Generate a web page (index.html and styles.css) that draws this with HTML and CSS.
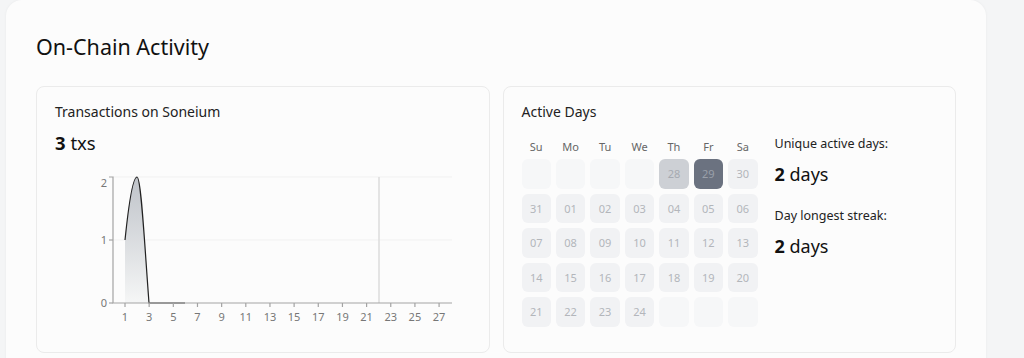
FILE: index.html
```html
<!DOCTYPE html>
<html lang="en">
<head>
    <meta charset="UTF-8">
    <meta name="viewport" content="width=device-width, initial-scale=1.0">
    <title>On-Chain Activity</title>
    <link rel="stylesheet" href="styles.css">
</head>
<body>
    <div class="panel">
        <h2 class="panel-title">On-Chain Activity</h2>

        <div class="cards">
            <!-- transactions chart -->
            <div class="card">
                <div class="card-title">Transactions on Soneium</div>
                <div class="big-value"><b>3</b> txs</div>
                <svg class="chart" width="415" height="165" viewBox="0 0 415 165">
                    <defs>
                        <linearGradient id="areaFill" x1="0" y1="0" x2="0" y2="1">
                            <stop offset="0" stop-color="#bfc3c9"/>
                            <stop offset="1" stop-color="#f5f6f6"/>
                        </linearGradient>
                    </defs>
                    <line x1="58" y1="11" x2="397" y2="11" class="grid"/>
                    <line x1="58" y1="74" x2="397" y2="74" class="grid"/>
                    <line x1="324" y1="11" x2="324" y2="137" class="marker"/>

                    <path d="M70,74 C73,45 77,11 82,11 C86,11 89,70 94,137 L70,137 Z" fill="url(#areaFill)"/>
                    <path d="M70,74 C73,45 77,11 82,11 C86,11 89,70 94,137 L130,137" class="line"/>

                    <path d="M54,11 H58 V137 H397" class="axis"/>
                    <line x1="54" y1="74" x2="58" y2="74" class="axis"/>
                    <line x1="54" y1="137" x2="58" y2="137" class="axis"/>
                    <g class="ylabels">
                        <text x="52" y="21">2</text>
                        <text x="52" y="78">1</text>
                        <text x="52" y="141">0</text>
                    </g>
                    <g class="xticks" id="xticks"></g>
                </svg>
            </div>

            <!-- active days -->
            <div class="card">
                <div class="card-title">Active Days</div>
                <div class="days-body">
                    <div class="calendar">
                        <div class="weekdays">
                            <span>Su</span><span>Mo</span><span>Tu</span><span>We</span><span>Th</span><span>Fr</span><span>Sa</span>
                        </div>
                        <div class="days" id="days"></div>
                    </div>
                    <div class="stats">
                        <div class="stat-label">Unique active days:</div>
                        <div class="stat-value"><b>2</b> days</div>
                        <div class="stat-label second">Day longest streak:</div>
                        <div class="stat-value"><b>2</b> days</div>
                    </div>
                </div>
            </div>
        </div>
    </div>

    <script>
        // x axis ticks, one label every 2 days
        const ticks = document.getElementById('xticks');
        const ns = 'http://www.w3.org/2000/svg';
        for (let d = 1; d <= 27; d += 2) {
            const x = 70 + 12.08 * (d - 1);
            const tick = document.createElementNS(ns, 'line');
            tick.setAttribute('x1', x);
            tick.setAttribute('x2', x);
            tick.setAttribute('y1', 137);
            tick.setAttribute('y2', 141);
            tick.setAttribute('class', 'axis');
            ticks.appendChild(tick);
            const label = document.createElementNS(ns, 'text');
            label.setAttribute('x', x);
            label.setAttribute('y', 155);
            label.textContent = d;
            ticks.appendChild(label);
        }

        // calendar cells
        const cells = [
            '', '', '', '', '28', '29', '30',
            '31', '01', '02', '03', '04', '05', '06',
            '07', '08', '09', '10', '11', '12', '13',
            '14', '15', '16', '17', '18', '19', '20',
            '21', '22', '23', '24', '', '', ''
        ];
        const daysEl = document.getElementById('days');
        cells.forEach(function (n) {
            const cell = document.createElement('div');
            cell.className = 'day';
            if (n === '') cell.classList.add('empty');
            if (n === '28') cell.classList.add('light');
            if (n === '29') cell.classList.add('dark');
            cell.textContent = n;
            daysEl.appendChild(cell);
        });
    </script>
</body>
</html>
```

FILE: styles.css
```css
body {
    margin: 0;
    background-color: #f4f5f6;
    font-family: 'Noto Sans', 'Open Sans', Arial, sans-serif;
    color: #111;
}
.panel {
    width: 980px;
    margin-left: 6px;
    box-sizing: border-box;
    padding: 33px 30px 30px;
    background-color: #fcfcfc;
    border-radius: 16px;
    box-shadow: 0 0 3px rgba(0,0,0,0.05);
    min-height: 400px;
}
.panel-title {
    margin: 0 0 25px;
    font-size: 21.5px;
    line-height: 28px;
    font-weight: 400;
}
.cards {
    display: grid;
    grid-template-columns: 1fr 1fr;
    gap: 13px;
}
.card {
    height: 267px;
    box-sizing: border-box;
    padding: 16px 18px;
    border: 1px solid #ebebeb;
    border-radius: 8px;
    background-color: #fcfcfc;
}
.card-title {
    font-size: 14px;
    line-height: 18px;
    color: #222;
}
.big-value {
    margin-top: 9px;
    font-size: 18.5px;
    line-height: 26px;
}
.big-value b {
    font-weight: 700;
}
.chart {
    display: block;
    margin-top: 10px;
}
.chart .grid {
    stroke: #f1f1f1;
    stroke-width: 1;
}
.chart .marker {
    stroke: #dcdcdc;
    stroke-width: 1.5;
}
.chart .axis {
    fill: none;
    stroke: #a3a3a3;
    stroke-width: 1.2;
}
.chart .line {
    fill: none;
    stroke: #222;
    stroke-width: 1.2;
}
.chart text {
    font-family: 'Noto Sans', Arial, sans-serif;
    font-size: 11px;
    fill: #777;
}
.chart .ylabels text {
    text-anchor: end;
}
.chart .xticks text {
    text-anchor: middle;
}
.days-body {
    display: flex;
    gap: 17px;
    margin-top: 14px;
}
.calendar {
    margin-top: 4px;
    width: 236px;
}
.weekdays {
    display: grid;
    grid-template-columns: repeat(7, 1fr);
    gap: 5px;
    margin-bottom: 4px;
}
.weekdays span {
    text-align: center;
    font-size: 11px;
    line-height: 16px;
    color: #666;
}
.days {
    display: grid;
    grid-template-columns: repeat(7, 1fr);
    gap: 5px;
}
.day {
    height: 29.5px;
    display: flex;
    align-items: center;
    justify-content: center;
    border-radius: 6px;
    background-color: #f1f2f4;
    font-size: 11px;
    color: #b3b6bb;
}
.day.empty {
    background-color: #f6f7f8;
}
.day.light {
    background-color: #cdd0d5;
    color: #a6aab1;
}
.day.dark {
    background-color: #6b7280;
    color: #9aa0aa;
}
.stats {
    flex: 1;
}
.stat-label {
    font-size: 12.5px;
    line-height: 18px;
    color: #222;
}
.stat-label.second {
    margin-top: 20px;
}
.stat-value {
    margin-top: 8px;
    font-size: 18px;
    line-height: 26px;
}
.stat-value b {
    font-weight: 700;
}
```
